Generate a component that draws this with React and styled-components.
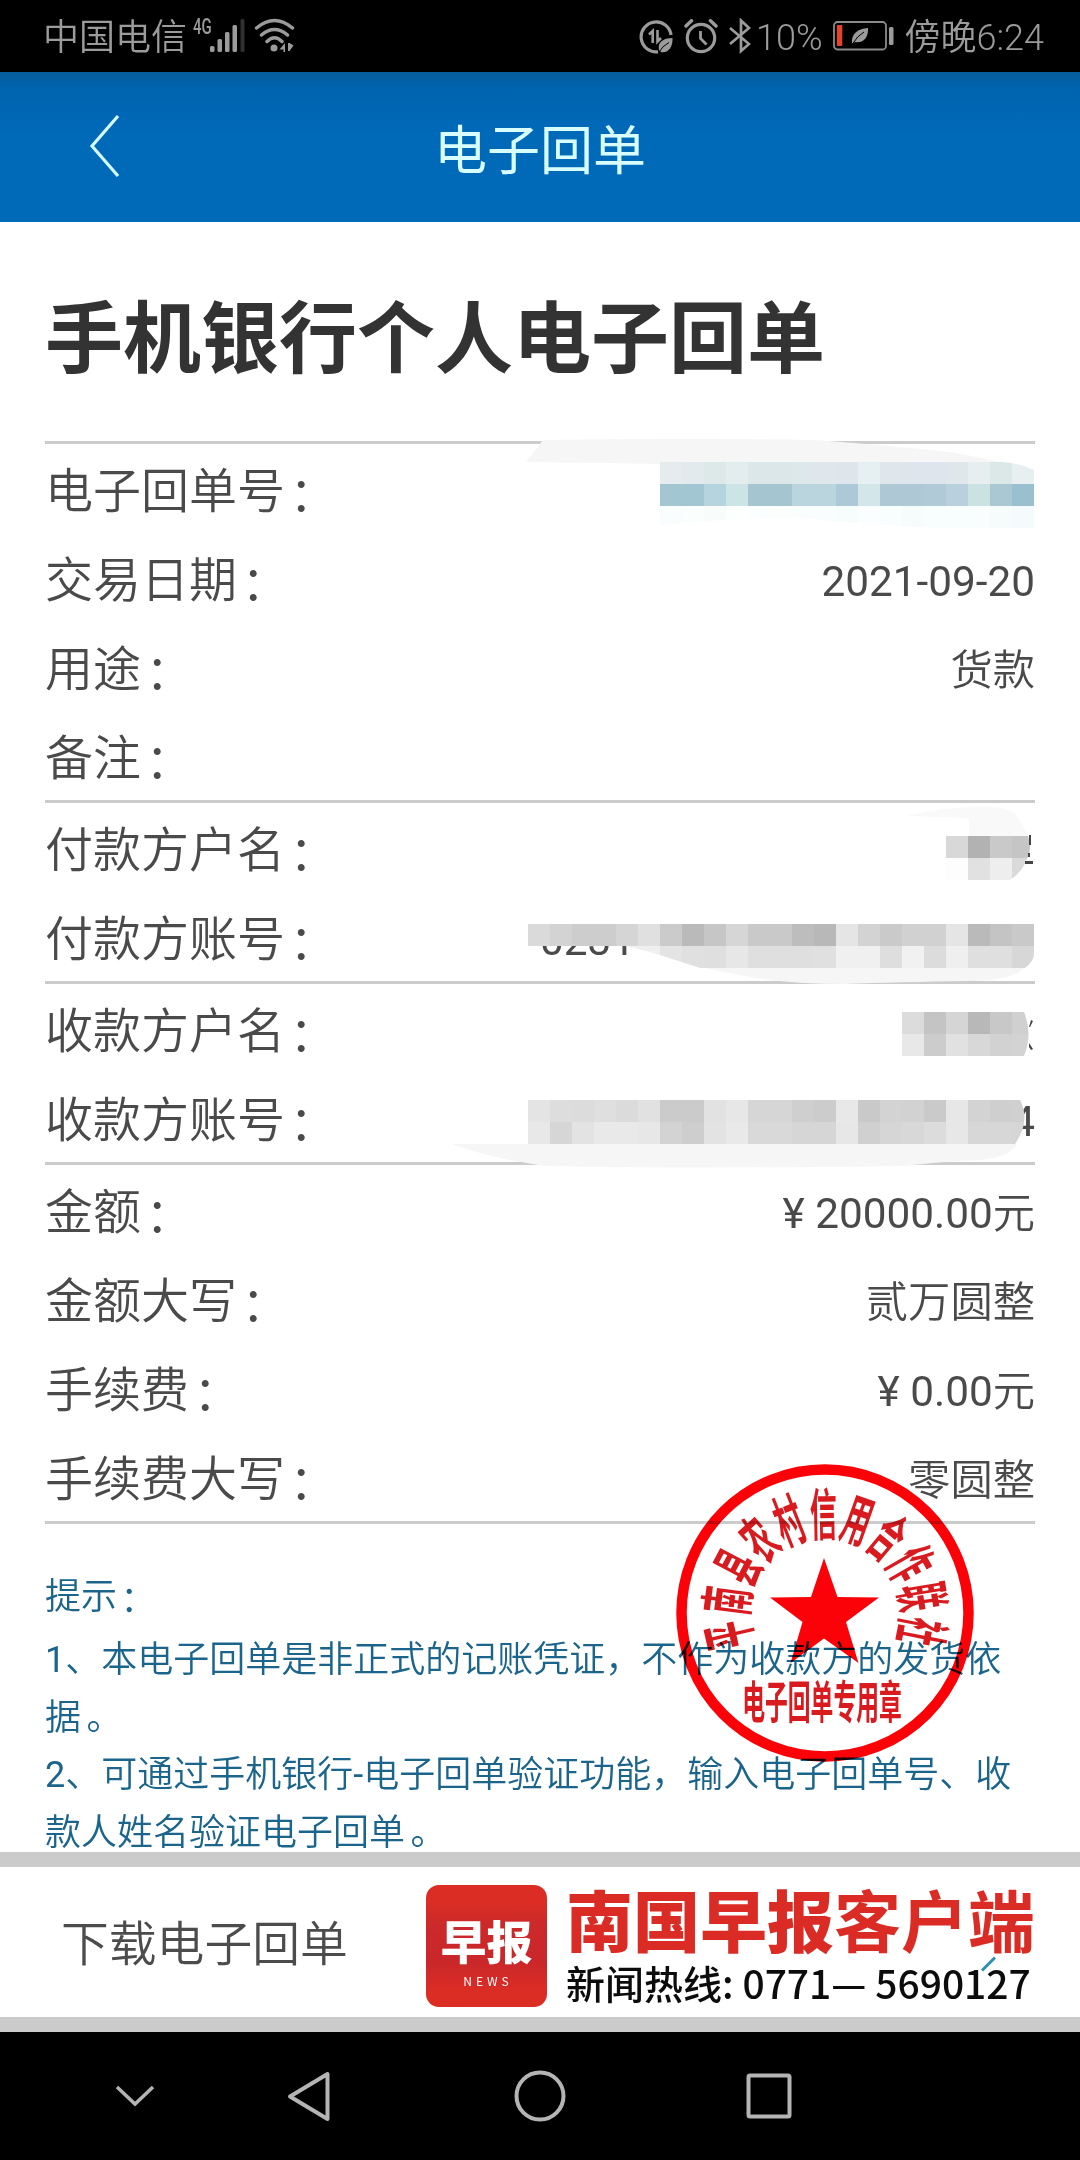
import React from "react";
import styled, { createGlobalStyle } from "styled-components";

const cjk = `"Noto Sans CJK SC", sans-serif`;
const mixed = `Roboto, "Noto Sans CJK SC DemiLight", "Noto Sans CJK SC", sans-serif`;

const receiptNo = {
  x: 615,
  y: 18,
  clip: "M615 18H956Q976 19 989 26V84H900Q800 80 760 74Q700 72 615 82Z",
  smear: "M481 18L498 -4Q650 -6 770 -4Q850 2 905 8Q940 14 960 20H620Z",
  rows: [
    "e6eced e2eaed dde9e9 e3eded dbe7e8 dbe7e8 dce8ea dfe6ec dee6eb e6eff2 dfe7ec dfe5ec dfe5ec dfe7eb e7eef0 dce8e8 e7eff1",
    "a2c6d2 a2c6d2 b6d4dd cde4e6 a5c5d1 a5c5d1 bbd5de bbd5de adc8d7 d3e7e8 aec9d5 aec9d5 b1cad8 b9d1dc cbe2e3 a9c8d4 9abfce",
    "f9fdfd fafefd f8fdfc fdfefe fafefe fcfefe f9fdfd f9fdfd f7fcfd fbfefe f8fdfd f6fcfc f8fdfd f8fdfd fafdfd f6fcfc f5fbfc"
  ]
};

const payerName = {
  x: 901,
  y: 33,
  clip: "M901 33H983Q988 45 981 58Q977 69 965 77H901Z",
  smear: "M862 13Q900 3 940 4Q968 3 975 18L984 34H924V15Z",
  smearColor: "#f9f9f9",
  rows: ["d8d8d8 b2b2b2 c9c9c9 c5c5c5", "fdfdfd e1e1e1 eeeeee dadada"],
  rest: "M984 32H986V42H984ZM983 50H985V54H983ZM980 58H988V61H980Z"
};

const payerAccount = {
  x: 483,
  y: 32,
  clip: "M483 32H989V62Q989 69 980 76H655L618 64Q600 58 580 54H483Z",
  smear: "M655 75H980Q970 88 925 89Q850 90 800 92Q740 92 700 84Z",
  rows: [
    "dadada d3d3d3 cdcdcd cdcdcd d5d5d5 e0e0e0 cbcbcb bababa c6c6c6 d6d6d6 c9c9c9 c9c9c9 bdbdbd b8b8b8 e5e5e5 d3d3d3 cacaca d1d1d1 d1d1d1 e5e5e5 bababa c4c4c4 c9c9c9",
    "none none none none f3f3f3 efefef e4e4e4 e0e0e0 dfdfdf e7e7e7 dfdfdf dfdfdf dfdfdf e0e0e0 f0f0f0 f0f0f0 dedede f1f1f1 dcdcdc efefef dfdfdf dfdfdf d7d7d7"
  ]
};

const payeeName = {
  x: 857,
  y: 28,
  clip: "M857 28H979Q988 50 979 72H857Z",
  rows: [
    "dcdcdc c4c4c4 d5d5d5 b8b8b8 c8c8c8 d0d0d0",
    "e8e8e8 cccccc e1e1e1 d8d8d8 d2d2d2 d3d3d3"
  ],
  rest: "M986 36L988 37L985 43L984 43ZM984 59L988 65L986 66L984 63Z"
};

const payeeAccount = {
  x: 483,
  y: 27,
  clip: "M483 27H975Q986 48 970 71H483Z",
  smear: "M407 71H972Q965 84 935 87Q890 89 860 93Q650 96 500 93Q440 84 407 71Z",
  rows: [
    "e4e4e4 dddddd dcdcdc dfdfdf dbdbdb e1e1e1 cbcbcb cbcbcb e2e2e2 e7e7e7 d6d6d6 d6d6d6 cfcfcf cccccc e8e8e8 c9c9c9 d3d3d3 d2d2d2 cacaca e7e7e7 d3d3d3 cfcfcf d0d0d0",
    "e8e8e8 d6d6d6 e3e3e3 e9e9e9 e9e9e9 e7e7e7 d3d3d3 cecece e3e3e3 e9e9e9 d9d9d9 d9d9d9 d6d6d6 d6d6d6 e7e7e7 d0d0d0 d6d6d6 d8d8d8 dcdcdc e7e7e7 d7d7d7 d7d7d7 d6d6d6"
  ]
};

const sections = [
  [
    { label: "电子回单号", mask: receiptNo },
    { label: "交易日期", value: "2021-09-20" },
    { label: "用途", value: "货款" },
    { label: "备注" }
  ],
  [
    { label: "付款方户名", mask: payerName },
    { label: "付款方账号", value: "0231", start: true, mask: payerAccount }
  ],
  [
    { label: "收款方户名", mask: payeeName },
    { label: "收款方账号", value: "4", mask: payeeAccount }
  ],
  [
    { label: "金额", value: "¥ 20000.00元" },
    { label: "金额大写", value: "贰万圆整" },
    { label: "手续费", value: "¥ 0.00元" },
    { label: "手续费大写", value: "零圆整" }
  ]
];

const Mosaic = ({ id, mask }) => (
  <MosaicSvg viewBox='0 0 990 89'>
    <clipPath id={id}>
      <path d={mask.clip} />
    </clipPath>
    {mask.smear && <path d={mask.smear} fill={mask.smearColor || "#f6f6f6"} />}
    <g clipPath={`url(#${id})`} shapeRendering='crispEdges'>
      {mask.rows.map((row, r) =>
        row.split(" ").map((color, c) => (
          <rect
            key={`${r}-${c}`}
            x={mask.x + c * 22}
            y={mask.y + r * 22}
            width='22'
            height='22'
            fill={color === "none" ? "none" : `#${color}`}
          />
        ))
      )}
    </g>
    {mask.rest && <path d={mask.rest} fill='#444' />}
  </MosaicSvg>
);

const SealMark = () => (
  <Seal viewBox='-150 -150 300 300'>
    <circle r='143.5' fill='none' stroke='#fa0208' strokeWidth='10.5' />
    <polygon
      fill='#fa0208'
      points='-1,-55 12.5,-16 54,-15.5 21,9 33.5,50 -1,25.5 -34.5,50 -22.5,9 -55,-15.5 -14,-16'
    />
    {"平南县农村信用合作联社".split("").map((char, i) => (
      <g key={char} transform={`rotate(${(i - 5) * 20.4 - 1}) translate(0 -98)`}>
        <SealText fontSize='27' transform='scale(1 2.1)' y='9.8'>
          {char}
        </SealText>
      </g>
    ))}
    <g transform='translate(-3 89.5)'>
      <SealText fontSize='22.8' transform='scale(1 1.98)' y='8.4'>
        电子回单专用章
      </SealText>
    </g>
  </Seal>
);

const App = () => (
  <Phone>
    <GlobalStyle />
    <StatusBar>
      <StatusGroup>
        <StatusText>中国电信</StatusText>
        <Network>4G</Network>
        <svg width='36' height='34' viewBox='0 0 36 34' fill='#9b9b9b'>
          <rect x='0' y='27' width='4.5' height='6' rx='1.5' />
          <rect x='7.5' y='20' width='4.5' height='13' rx='1.5' />
          <rect x='15' y='13' width='4.5' height='20' rx='1.5' />
          <rect x='22.5' y='6' width='4.5' height='27' rx='1.5' />
          <rect x='30.5' y='0' width='4' height='33' rx='1.5' fill='#303030' />
        </svg>
        <WifiIcon width='42' height='36' viewBox='0 0 42 36' fill='none' stroke='#9b9b9b'>
          <path
            d='M2.5 10Q20.5 -5 38.5 10M7.5 17Q20.5 6 33.5 17M13 23.5Q20.5 16 28 23.5'
            strokeWidth='3.5'
            strokeLinecap='round'
          />
          <circle cx='20' cy='30' r='3.5' fill='#9b9b9b' stroke='none' />
          <path d='M31 25V34H29.5V31.5H25.5ZM34 25H35.5L39.5 27.5L35.5 33H34Z' fill='#9b9b9b' stroke='none' />
        </WifiIcon>
      </StatusGroup>
      <StatusGroup>
        <svg width='35' height='35' viewBox='0 0 35 35' fill='none' stroke='#9b9b9b'>
          <path d='M19 32.8A15 15 0 1 1 32 16' strokeWidth='3.2' />
          <path d='M10 15.5L13.7 12V24M18.5 11V22.5L22 19' strokeWidth='2.6' />
          <path d='M20 31C18 22 26 19 33.5 19C34 28 29 34.5 22 33Z' fill='#9b9b9b' stroke='none' />
          <path d='M19.5 34Q23 27 30 23.5' stroke='#000' strokeWidth='1' />
        </svg>
        <AlarmIcon width='34' height='35' viewBox='0 0 34 35' fill='none' stroke='#9b9b9b'>
          <circle cx='17' cy='19' r='13.7' strokeWidth='3.2' />
          <path d='M2 7L7.5 1.8M32 7L26.5 1.8' strokeWidth='3.5' strokeLinecap='round' />
          <path d='M16.5 12V19.5L22.5 25.5' strokeWidth='2.8' />
        </AlarmIcon>
        <BluetoothIcon width='22' height='36' viewBox='0 0 22 36' fill='none' stroke='#9b9b9b'>
          <path d='M1 10L20 26L12 33V2.5L20 10L1 26' strokeWidth='2.7' />
        </BluetoothIcon>
        <StatusText>10%</StatusText>
        <BatteryIcon width='62' height='30' viewBox='0 0 62 30' fill='none'>
          <rect x='1' y='1' width='52' height='27.5' rx='3.5' stroke='#8a8a8a' strokeWidth='1.8' />
          <rect x='3.8' y='4' width='5.5' height='21' rx='1' fill='#e0432f' />
          <path d='M19 23C18 13 24 8 35 7C35.5 16 31 22.5 22 21Z' fill='#9b9b9b' />
          <path d='M19.5 23Q24 15 31 11' stroke='#000' strokeWidth='1' />
          <rect x='56' y='6' width='4.5' height='18' rx='1.5' fill='#9b9b9b' />
        </BatteryIcon>
        <StatusText>傍晚6:24</StatusText>
      </StatusGroup>
    </StatusBar>

    <Header>
      <BackIcon width='32' height='64' viewBox='0 0 32 64' fill='none'>
        <path d='M29 2L3 32L29 62' stroke='#d4fbff' strokeWidth='3.2' />
      </BackIcon>
      <HeaderTitle>电子回单</HeaderTitle>
    </Header>

    <Receipt>
      <Heading>手机银行个人电子回单</Heading>
      {sections.map((rows, s) => (
        <Section key={s}>
          {rows.map((row, r) => (
            <Row key={row.label}>
              <Label>
                {row.label}
                <Colon>：</Colon>
              </Label>
              {row.value && <Value $start={row.start}>{row.value}</Value>}
              {row.mask && <Mosaic id={`mask-${s}-${r}`} mask={row.mask} />}
            </Row>
          ))}
        </Section>
      ))}
      <Tips>
        <TipsTitle>
          提示<Colon>：</Colon>
        </TipsTitle>
        <p>
          1、本电子回单是非正式的记账凭证，不作为收款方的发货依据<Stop>。</Stop>
        </p>
        <p>
          2、可通过手机银行-电子回单验证功能，输入电子回单号、收款人姓名验证电子回单<Stop>。</Stop>
        </p>
      </Tips>
      <SealMark />
    </Receipt>

    <Footer>
      <Download>下载电子回单</Download>
      <NewsLogo>
        <LogoText>早报</LogoText>
        <LogoSub>NEWS</LogoSub>
      </NewsLogo>
      <News>
        <NewsName>
          <b>南国早报</b>客户端
        </NewsName>
        <Hotline>新闻热线: 0771— 5690127</Hotline>
      </News>
      <PenMark width='18' height='16' viewBox='0 0 18 16'>
        <path d='M2 14.5L15 1.5' stroke='#2f8fb0' strokeWidth='3' />
      </PenMark>
    </Footer>

    <NavBar viewBox='0 0 1080 128' fill='none' stroke='#b4b4b4' strokeWidth='4'>
      <path d='M117 55L135 72L153 55' strokeWidth='3.5' />
      <path d='M327.5 42V87L290 64.5Z' strokeLinejoin='round' />
      <circle cx='540' cy='64' r='23.5' />
      <rect x='748.5' y='43.5' width='41' height='41' rx='1.5' />
    </NavBar>
  </Phone>
);

const GlobalStyle = createGlobalStyle`
  body {
    margin: 0;
    background: #000;
  }
  p {
    margin: 0;
  }
`;

const Phone = styled.div`
  width: 1080px;
  height: 2160px;
  display: flex;
  flex-direction: column;
  overflow: hidden;
  background: #fff;
  font-family: ${mixed};
`;

const StatusBar = styled.div`
  height: 72px;
  display: flex;
  justify-content: space-between;
  box-sizing: border-box;
  padding: 0 36px 0 43px;
  background: #000;
  color: #9b9b9b;
`;

const StatusGroup = styled.div`
  display: flex;
  align-items: center;
  height: 72px;
`;

const StatusText = styled.span`
  padding-top: 4px;
  font-size: 36px;
  font-weight: 350;
  line-height: 68px;
  white-space: pre;
`;

const Network = styled.span`
  align-self: flex-start;
  margin: 16px -9px 0 6px;
  width: 26px;
  font-family: Roboto, sans-serif;
  font-size: 22px;
  font-weight: 500;
  line-height: 22px;
  transform: scaleX(0.68);
  transform-origin: left;
`;

const WifiIcon = styled.svg`
  margin-left: 8px;
`;

const AlarmIcon = styled.svg`
  margin-left: 10px;
`;

const BluetoothIcon = styled.svg`
  margin: 0 5px 0 11px;
`;

const BatteryIcon = styled.svg`
  margin: 0 10px;
`;

const Header = styled.header`
  position: relative;
  height: 150px;
  display: flex;
  align-items: center;
  justify-content: center;
  background: linear-gradient(#075d9b 0, #0064af 16px, #0069b8 60px);
`;

const BackIcon = styled.svg`
  position: absolute;
  left: 89px;
  top: 42px;
`;

const HeaderTitle = styled.h1`
  margin: 0;
  color: #d8fdff;
  font-family: ${cjk};
  font-size: 53px;
  font-weight: 400;
  line-height: 149px;
`;

const Receipt = styled.main`
  position: relative;
  height: 1630px;
  padding: 0 45px;
`;

const Heading = styled.h2`
  box-sizing: border-box;
  height: 219px;
  margin: 0;
  color: #333;
  font-family: ${cjk};
  font-size: 78px;
  font-weight: 700;
  line-height: 222px;
  white-space: nowrap;
`;

const Section = styled.section`
  border-top: 3px solid #cbcbcb;
  &:nth-of-type(4) {
    border-bottom: 3px solid #cbcbcb;
  }
`;

const Row = styled.div`
  position: relative;
  height: 89px;
  display: flex;
  align-items: flex-start;
  justify-content: space-between;
`;

const Label = styled.span`
  color: #4a4a4a;
  font-family: ${cjk};
  font-size: 48px;
  font-weight: 350;
  line-height: 87px;
`;

const Colon = styled.span`
  padding-left: 0.09em;
  font-weight: 350;
  line-height: 1;
  vertical-align: -3px;
`;

const Stop = styled.span`
  padding-left: 0.15em;
`;

const Value = styled.span`
  color: #4a4a4a;
  font-size: 42.3px;
  line-height: 97px;
  ${props => props.$start && "width: 495px;"}
`;

const MosaicSvg = styled.svg`
  position: absolute;
  z-index: 1;
  left: 0;
  top: 0;
  width: 990px;
  height: 89px;
  overflow: visible;
`;

const Tips = styled.div`
  padding-top: 45px;
  color: #1b658c;
  font-size: 36px;
  line-height: 57.4px;
`;

const TipsTitle = styled.p`
  margin-bottom: 6px;
`;

const Seal = styled.svg`
  position: absolute;
  left: 675px;
  top: 1241px;
  width: 300px;
  height: 300px;
  overflow: visible;
  mix-blend-mode: multiply;
`;

const SealText = styled.text`
  fill: #d91a1f;
  font-family: ${cjk};
  font-weight: 700;
  text-anchor: middle;
`;

const Footer = styled.footer`
  position: relative;
  box-sizing: border-box;
  height: 180px;
  display: flex;
  align-items: center;
  border-top: 15px solid #cbcbcb;
  border-bottom: 15px solid #cbcbcb;
  padding-left: 61px;
`;

const Download = styled.span`
  width: 365px;
  padding-bottom: 3px;
  color: #4c4c4c;
  font-family: ${cjk};
  font-size: 47.8px;
  font-weight: 350;
`;

const NewsLogo = styled.div`
  width: 121px;
  height: 122px;
  margin-top: 8px;
  display: flex;
  flex-direction: column;
  align-items: center;
  border-radius: 13px;
  background: linear-gradient(#dc2d24 0 14%, #cb292a 32%, #c9272a 62%, #dc2d24 88%);
  color: #fff;
`;

const LogoText = styled.span`
  margin-top: 31px;
  font-family: ${cjk};
  font-size: 46px;
  font-weight: 900;
  line-height: 46px;
`;

const LogoSub = styled.span`
  margin: 12px 0 0 3px;
  font-family: ${cjk};
  font-size: 12px;
  line-height: 14px;
  letter-spacing: 4px;
`;

const News = styled.div`
  display: flex;
  flex-direction: column;
  gap: 4px;
  margin: 5px 0 0 19px;
  white-space: nowrap;
`;

const NewsName = styled.div`
  color: #da2c24;
  font-family: ${cjk};
  font-size: 67px;
  font-weight: 700;
  line-height: 71px;
  b {
    font-weight: 900;
  }
`;

const Hotline = styled.div`
  color: #0c0c0c;
  font-family: ${cjk};
  font-size: 39px;
  font-weight: 500;
  line-height: 50px;
`;

const PenMark = styled.svg`
  position: absolute;
  left: 980px;
  top: 89px;
`;

const NavBar = styled.svg`
  width: 1080px;
  height: 128px;
  background: #000;
`;

export default App;
